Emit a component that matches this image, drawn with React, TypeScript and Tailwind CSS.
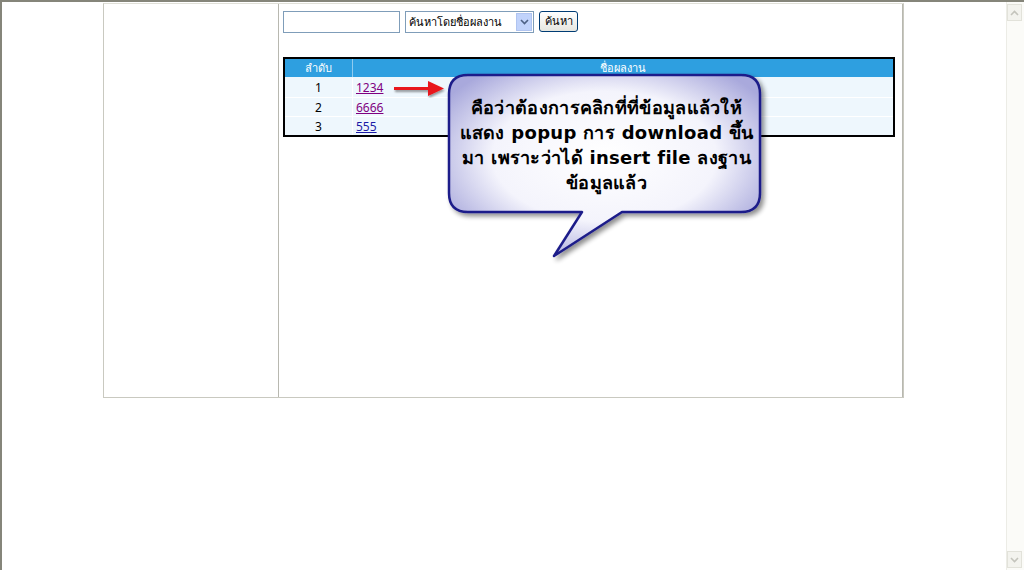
import React from "react";

export default function App() {
  const rows = [
    { n: "1", t: "1234", c: "text-[#800080]" },
    { n: "2", t: "6666", c: "text-[#800080]" },
    { n: "3", t: "555", c: "text-[#1a1aa6]" },
  ];
  return (
    <div
      className="relative w-[1024px] h-[570px] bg-white overflow-hidden border-t-2 border-l-2 border-[#85857a] flex"
      style={{ fontFamily: "Tahoma, 'Noto Sans', 'DejaVu Sans', sans-serif" }}
    >
      <div className="flex-1 relative">
        <div className="ml-[101px] mt-[1px] w-[801px] h-[395px] border border-[#c9c9c0] border-t-[#e0e0d8] flex">
          <div className="w-[174px] shrink-0"></div>
          <div className="flex-1 border-l border-[#b8b8b0] border-r border-r-[#b8b8b0] flex flex-col pl-[4px] pt-[7px]">
            <div className="flex items-start gap-[5px]">
              <div className="w-[117px] h-[22px] border border-[#7f9db9] bg-white"></div>
              <div className="w-[129px] h-[22px] border border-[#7f9db9] bg-white flex items-center justify-between pl-[3px] pr-[1px]">
                <span className="text-[11px] text-black">ค้นหาโดยชื่อผลงาน</span>
                <div className="w-[16px] h-[18px] bg-[#c1d3fb] border border-[#b0c4f0] flex items-center justify-center">
                  <svg width="9" height="6" viewBox="0 0 9 6">
                    <path d="M1 1 L4.5 4.5 L8 1" fill="none" stroke="#4d6185" strokeWidth="1.6" />
                  </svg>
                </div>
              </div>
              <div className="w-[39px] h-[21px] border border-[#003c74] rounded-[3px] bg-gradient-to-b from-white to-[#e6e6e0] flex items-center justify-center text-[11px] text-black">
                ค้นหา
              </div>
            </div>
            <div className="mt-[24px] w-[612px] border-2 border-black bg-[#eef7fd]">
              <div className="flex h-[18px] bg-[#2e9fe0] text-white text-[11px] leading-[18px]">
                <div className="w-[68px] text-center border-r border-[#8fcbef]">ลำดับ</div>
                <div className="flex-1 text-center">ชื่อผลงาน</div>
              </div>
              {rows.map((r, i) => (
                <div
                  key={r.n}
                  className={`flex h-[19px] text-[12px] leading-[19px] ${i > 0 ? "border-t border-white" : "mt-[1px]"}`}
                >
                  <div className="w-[68px] text-center text-black border-r border-white">{r.n}</div>
                  <div className={`flex-1 pl-[3px] underline ${r.c}`}>{r.t}</div>
                </div>
              ))}
            </div>
          </div>
        </div>
      </div>
      <div className="w-[18px] shrink-0 bg-[#fbfbf8] border-l border-[#ecece6] flex flex-col justify-between py-[2px] pr-[2px]">
        <div className="h-[17px] bg-[#f3f3ee] border border-[#e2e2da] flex items-center justify-center">
          <svg width="9" height="6" viewBox="0 0 9 6">
            <path d="M1 5 L4.5 1.5 L8 5" fill="none" stroke="#c4c4bc" strokeWidth="1.6" />
          </svg>
        </div>
        <div className="h-[17px] bg-[#f3f3ee] border border-[#e2e2da] flex items-center justify-center">
          <svg width="9" height="6" viewBox="0 0 9 6">
            <path d="M1 1 L4.5 4.5 L8 1" fill="none" stroke="#c4c4bc" strokeWidth="1.6" />
          </svg>
        </div>
      </div>

      {/* overlay: arrow + callout */}
      <svg className="absolute left-[-2px] top-[-2px] pointer-events-none" width="1024" height="570" viewBox="0 0 1024 570">
        <defs>
          <radialGradient id="bg" cx="0.5" cy="0.45" r="0.6">
            <stop offset="0" stopColor="#ffffff" />
            <stop offset="0.6" stopColor="#f4f4fc" />
            <stop offset="1" stopColor="#a9a9dc" />
          </radialGradient>
          <filter id="sh" x="-10%" y="-10%" width="130%" height="130%">
            <feGaussianBlur in="SourceAlpha" stdDeviation="2.5" />
            <feOffset dx="3" dy="3" />
            <feComponentTransfer>
              <feFuncA type="linear" slope="0.45" />
            </feComponentTransfer>
            <feMerge>
              <feMergeNode />
              <feMergeNode in="SourceGraphic" />
            </feMerge>
          </filter>
          <filter id="ash">
            <feGaussianBlur in="SourceAlpha" stdDeviation="1" />
            <feOffset dx="1" dy="2" />
            <feComponentTransfer>
              <feFuncA type="linear" slope="0.4" />
            </feComponentTransfer>
            <feMerge>
              <feMergeNode />
              <feMergeNode in="SourceGraphic" />
            </feMerge>
          </filter>
        </defs>
        <g filter="url(#ash)">
          <path d="M394 87 L428 87 L428 81 L444 88.5 L428 96 L428 90 L394 90 Z" fill="#e8141a" />
        </g>
        <path
          filter="url(#sh)"
          d="M468 75 L741 75 Q760 75 760 94 L760 193 Q760 212 741 212 L622 212 L554 256 L582 212 L468 212 Q449 212 449 193 L449 94 Q449 75 468 75 Z"
          fill="url(#bg)"
          stroke="#1f1f8a"
          strokeWidth="2.5"
          strokeLinejoin="round"
        />
      </svg>
      <div
        className="absolute left-[447px] top-[93px] w-[315px] text-center font-bold text-[18px] leading-[25px] tracking-[0.3px] text-black pointer-events-none"
        style={{ fontFamily: "'DejaVu Sans', 'Noto Sans', sans-serif" }}
      >
        คือว่าต้องการคลิกที่ที่ข้อมูลแล้วให้
        <br />
        แสดง popup การ download ขึ้น
        <br />
        มา เพราะว่าได้ insert file ลงฐาน
        <br />
        ข้อมูลแล้ว
      </div>
    </div>
  );
}
